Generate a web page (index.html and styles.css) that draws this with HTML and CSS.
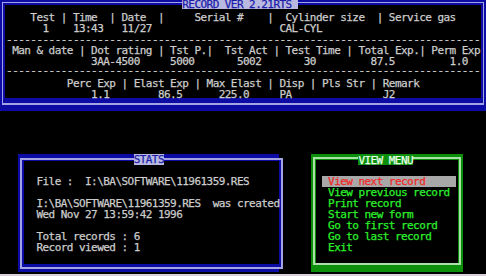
FILE: index.html
```html
<!DOCTYPE html>
<html>
<head>
<meta charset="utf-8">
<link rel="stylesheet" href="styles.css">
</head>
<body>
<div class="screen">
  <section class="box record">
    <h1 class="title record-title">RECORD VER 2.21RTS </h1>
    <div class="frame">
      <div class="panel record-panel">
<pre class="line">    Test | Time  | Date  |     Serial #    |  Cylinder size  | Service gas</pre>
<pre class="line">      1    13:43   11/27                     CAL-CYL</pre>
<pre class="line">------------------------------------------------------------------------------</pre>
<pre class="line"> Man &amp; date | Dot rating | Tst P.|  Tst Act | Test Time | Total Exp.| Perm Exp</pre>
<pre class="line">              3AA-4500     5000       5002       30         87.5         1.0</pre>
<pre class="line rule-low">------------------------------------------------------------------------------</pre>
<pre class="line">          Perc Exp | Elast Exp | Max Elast | Disp | Pls Str | Remark</pre>
<pre class="line">              1.1        86.5      225.0     PA               J2</pre>
      </div>
    </div>
  </section>

  <div class="lower">
    <section class="box stats">
      <h2 class="title stats-title">STATS</h2>
      <div class="frame">
        <div class="panel stats-panel">
<pre class="line">File :  I:\BA\SOFTWARE\11961359.RES</pre>
<pre class="line"> </pre>
<pre class="line">I:\BA\SOFTWARE\11961359.RES  was created</pre>
<pre class="line">Wed Nov 27 13:59:42 1996</pre>
<pre class="line"> </pre>
<pre class="line">Total records : 6</pre>
<pre class="line">Record viewed : 1</pre>
        </div>
      </div>
    </section>

    <section class="menu">
      <h2 class="menu-title">VIEW MENU</h2>
      <div class="menu-frame">
        <ul class="menu-list">
          <li class="item active">View next record</li>
          <li class="item">View previous record</li>
          <li class="item">Print record</li>
          <li class="item">Start new form</li>
          <li class="item">Go to first record</li>
          <li class="item">Go to last record</li>
          <li class="item">Exit</li>
        </ul>
      </div>
    </section>
  </div>
  <div class="floor"></div>
</div>
</body>
</html>
```

FILE: styles.css
```css
html, body {
  margin: 0;
  padding: 0;
  background: #000;
}

.screen {
  width: 486px;
  height: 276px;
  overflow: hidden;
  background: #000;
  font-family: "DejaVu Sans Mono", "Liberation Mono", monospace;
  font-size: 11px;
  line-height: 11px;
  letter-spacing: -0.547px;
  color: #cccccc;
  -webkit-text-stroke: 0.25px currentColor;
}

.line {
  margin: 0;
  font: inherit;
  white-space: pre;
  height: 11px;
}

/* ---------- blue double-line boxes ---------- */
.box {
  position: relative;
  box-sizing: border-box;
  display: flex;
  background: #0c0ca4;
}

.frame {
  flex: 1;
  display: flex;
  border: 1px solid #a4a4e4;
  background: #0c0ca4;
}

.panel {
  flex: 1;
  background: #000;
}

.title {
  position: absolute;
  top: 0;
  margin: 0;
  font: inherit;
  font-weight: normal;
  white-space: pre;
  background: #b8b8e0;
  color: #1c1ca8;
}

/* record box */
.record {
  height: 111px;
  padding: 2px 2px 6px 2px;
}

.record .frame {
  border-bottom-width: 2px;
  padding: 2px 2px 5px 2px;
}

.record-panel {
  padding: 7px 0 0 1.075px;
}

.record-title {
  left: 182.25px;
  height: 8px;
  padding-top: 1px;
  line-height: 8px;
}

.rule-low {
  margin-top: -2px;
  margin-bottom: 2px;
}

/* lower area */
.lower {
  display: flex;
  margin-top: 43px;
  padding-left: 18px;
  gap: 32px;
  height: 118px;
}

.stats {
  width: 261px;
  height: 118px;
  padding: 4px 2px 3px 2px;
}

.stats .frame {
  border-width: 2px;
  padding: 1px 2px 3px 2px;
}

.stats-panel {
  padding: 15px 0 0 12.45px;
}

.stats-title {
  left: 115.65px;
  height: 10px;
  padding-top: 1px;
  line-height: 10px;
}

/* green menu box */
.menu {
  position: relative;
  box-sizing: border-box;
  width: 152px;
  height: 118px;
  display: flex;
  padding: 3px 2px 7px 2px;
  background: #0c900c;
}

.menu-frame {
  flex: 1;
  display: flex;
  border: 2px solid #a8e0a8;
  background: #0c900c;
  padding: 1px 1px 0 1px;
}

.menu-title {
  position: absolute;
  top: 0;
  left: 47.4px;
  margin: 0;
  height: 10px;
  padding-top: 1px;
  line-height: 10px;
  font: inherit;
  font-weight: normal;
  white-space: pre;
  background: #0c900c;
  color: #eaffea;
}

.menu-list {
  flex: 1;
  list-style: none;
  margin: 0;
  padding: 16px 0 0 6px;
  background: #000;
  color: #2cf02c;
}

.item {
  width: 133.65px;
  height: 11px;
  padding-left: 6.075px;
  box-sizing: border-box;
  white-space: pre;
}

.item.active {
  background: #a8a8a8;
  color: #f02828;
}

.floor {
  margin-top: 2px;
  height: 2px;
  background: #d8d0d8;
}
```
